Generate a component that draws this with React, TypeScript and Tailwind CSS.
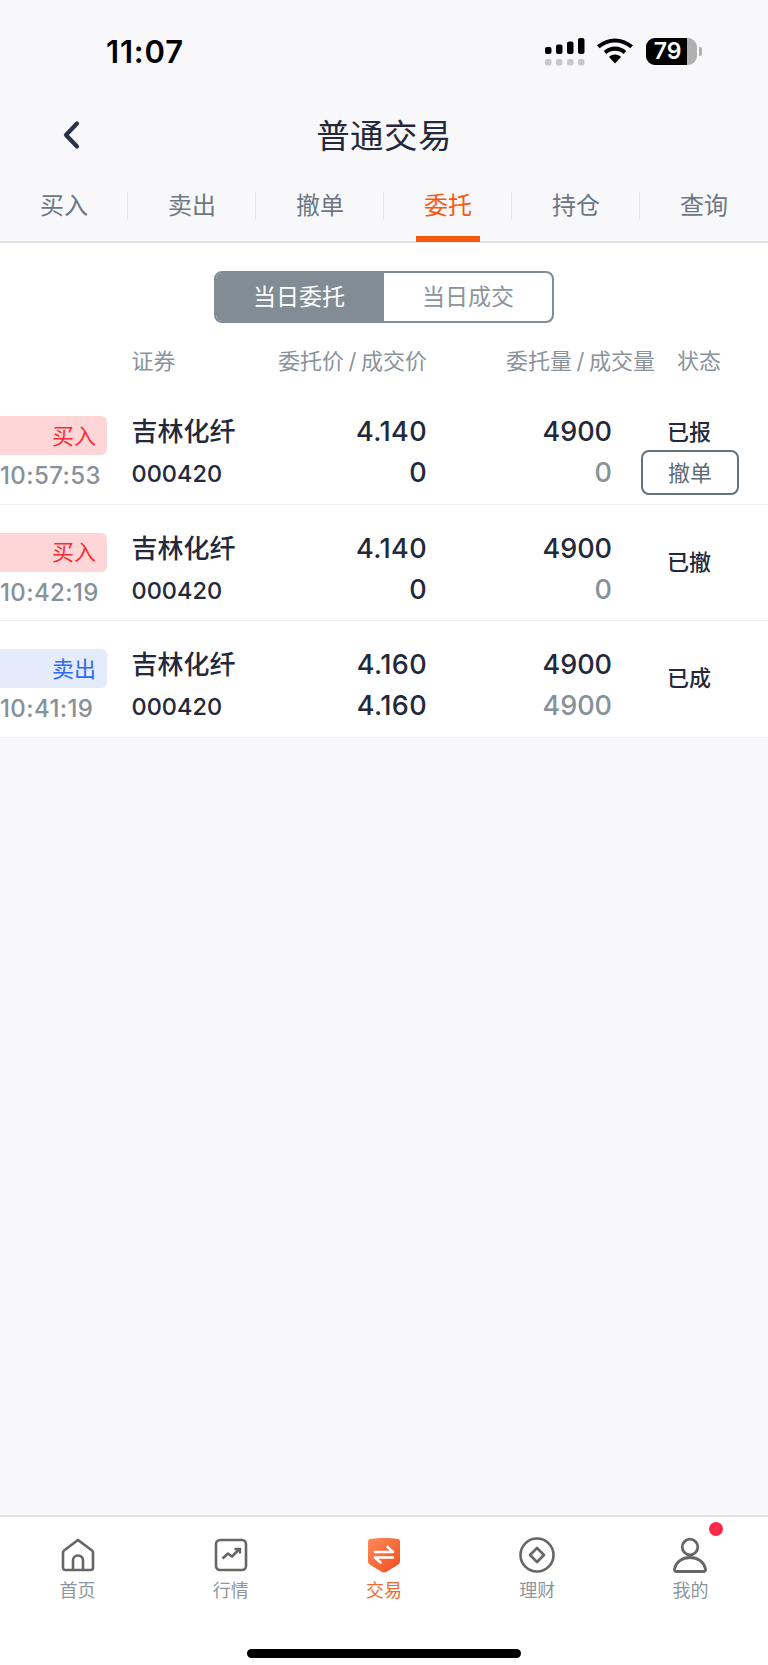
import React from "react";

const font = { fontFamily: 'Inter, "Noto Sans CJK SC", sans-serif' };

function StatusBar() {
  return (
    <div className="flex h-[100px] items-start justify-between pl-[106px] pr-[66px] pt-[33px]">
      <span className="text-[31px] leading-[38px] font-semibold text-black tracking-[0.8px]">11:07</span>
      <div className="flex items-start pt-[5px]">
        <svg width="40" height="28" viewBox="0 0 40 28" className="mr-[12px]">
          <rect x="0" y="9" width="6.5" height="7" rx="2" fill="#000" />
          <rect x="11" y="6.5" width="6.5" height="9.5" rx="2" fill="#000" />
          <rect x="22" y="3.5" width="6.5" height="12.5" rx="2" fill="#000" />
          <rect x="33" y="0" width="6.5" height="16" rx="2" fill="#000" />
          <rect x="0" y="21" width="6.5" height="6.5" rx="2" fill="#c8c8c8" />
          <rect x="11" y="21" width="6.5" height="6.5" rx="2" fill="#c8c8c8" />
          <rect x="22" y="21" width="6.5" height="6.5" rx="2" fill="#c8c8c8" />
          <rect x="33" y="21" width="6.5" height="6.5" rx="2" fill="#c8c8c8" />
        </svg>
        <svg width="36" height="26" viewBox="0 0 36 26" className="mr-[13px]">
          <path d="M18 0.5C11.5 0.5 5.6 3 0 7.2L2.6 10.2C7.4 6.6 12.4 4.6 18 4.6S28.6 6.6 33.4 10.2L36 7.2C30.4 3 24.5 0.5 18 0.5Z" fill="#000" />
          <path d="M18 8.6C13.7 8.6 9.8 10.3 6.8 13L9.4 16C11.7 14 14.7 12.8 18 12.8S24.3 14 26.6 16L29.2 13C26.2 10.3 22.3 8.6 18 8.6Z" fill="#000" />
          <path d="M18 16.6C15.7 16.6 13.6 17.5 12 18.9L18 25.5L24 18.9C22.4 17.5 20.3 16.6 18 16.6Z" fill="#000" />
        </svg>
        <div className="flex items-center">
          <div className="relative flex h-[27px] w-[51px] overflow-hidden rounded-[9px] bg-[#b0b0b0]">
            <div className="flex h-full w-[41px] items-center justify-center bg-black pl-[2px] text-[23px] font-semibold leading-none text-white">79</div>
          </div>
          <div className="ml-[2px] h-[9px] w-[3px] rounded-r-[2px] bg-[#b0b0b0]" />
        </div>
      </div>
    </div>
  );
}

function Header() {
  return (
    <div className="relative flex h-[71px] items-center justify-center">
      <svg width="20" height="30" viewBox="0 0 20 30" className="absolute left-[61px] top-[20px]">
        <path d="M16 3.5L5 15L16 26.5" fill="none" stroke="#2b3148" strokeWidth="4.2" strokeLinecap="round" strokeLinejoin="round" />
      </svg>
      <span className="text-[33.5px] leading-[40px] tracking-[0.4px] text-[#23283a]">普通交易</span>
    </div>
  );
}

function Tabs() {
  const tabs = ["买入", "卖出", "撤单", "委托", "持仓", "查询"];
  return (
    <div className="grid h-[72px] grid-cols-6 border-b-2 border-[#dfe3e8]">
      {tabs.map((t, i) => (
        <div key={t} className="relative flex items-start justify-center pt-[16px]">
          <span className={`text-[24px] leading-[38px] ${i === 3 ? "text-[#f9590d]" : "text-[#6d7783]"}`}>{t}</span>
          {i < 5 && <div className="absolute right-0 top-[21px] h-[28px] w-px bg-[#e3e6ea]" />}
          {i === 3 && <div className="absolute bottom-[-1px] left-[32px] h-[6px] w-[64px] bg-[#f9590d]" />}
        </div>
      ))}
    </div>
  );
}

const COLS = {
  a: "w-[131.5px] shrink-0",
  b: "w-[155.5px] shrink-0",
  c: "w-[140px] shrink-0 text-right",
  d: "w-[185px] shrink-0 text-right",
  e: "w-[154px] shrink-0",
};

type R = {
  side: string;
  sell?: boolean;
  time: string;
  p1: string;
  p2: string;
  q2: string;
  status: string;
  cancel?: boolean;
};

const rows: R[] = [
  { side: "买入", time: "10:57:53", p1: "4.140", p2: "0", q2: "0", status: "已报", cancel: true },
  { side: "买入", time: "10:42:19", p1: "4.140", p2: "0", q2: "0", status: "已撤" },
  { side: "卖出", sell: true, time: "10:41:19", p1: "4.160", p2: "4.160", q2: "4900", status: "已成" },
];

function Row({ r }: { r: R }) {
  return (
    <div className="flex h-[116.5px] border-b border-[#f0f1f5] bg-white pt-[28px]">
      <div className={COLS.a}>
        <div className={`flex h-[39px] w-[107px] items-center justify-end rounded-r-[6px] pr-[11px] text-[22px] leading-none ${r.sell ? "bg-[#e4ecfb] text-[#2f6bf2]" : "bg-[#ffd6d8] text-[#fb2b33]"}`}>
          {r.side}
        </div>
        <div className="mt-[6px] text-[24px] leading-[30px] font-medium tracking-[0.4px] text-[#87919a]">{r.time}</div>
      </div>
      <div className={COLS.b}>
        <div className="text-[26px] leading-[32px] font-medium text-[#23283a]">吉林化纤</div>
        <div className="mt-[11px] text-[23.5px] leading-[30px] font-medium text-[#23283a]">000420</div>
      </div>
      <div className={`${COLS.c} text-[27px] font-medium tracking-[0.4px] text-[#23283a]`}>
        <div className="leading-[32px]">{r.p1}</div>
        <div className="mt-[9px] leading-[32px]">{r.p2}</div>
      </div>
      <div className={`${COLS.d} text-[27px] font-medium`}>
        <div className="leading-[32px] text-[#23283a]">4900</div>
        <div className="mt-[9px] leading-[32px] text-[#87919a]">{r.q2}</div>
      </div>
      <div className={`${COLS.e} flex flex-col items-center ${r.cancel ? "" : "justify-center pb-[29px]"}`}>
        <div className="text-[22px] leading-[32px] font-medium text-[#23283a]">{r.status}</div>
        {r.cancel && (
          <div className="ml-[2px] mt-[2px] flex h-[45px] w-[98px] items-center justify-center rounded-[8px] border-2 border-[#66717e] text-[22px] leading-none text-[#5f6b78]">
            撤单
          </div>
        )}
      </div>
    </div>
  );
}

function HomeIcon() {
  return (
    <svg width="34" height="34" viewBox="0 0 34 34" fill="none" stroke="#666" strokeWidth="2.6" strokeLinejoin="round">
      <path d="M17 2L31 12.5C31.8 13 32 14 32 15V29.5C32 31 31 32 29.5 32H4.5C3 32 2 31 2 29.5V15C2 14 2.2 13 3 12.5L17 2Z" />
      <path d="M12 32V22.5C12 19.5 14 17.5 17 17.5S22 19.5 22 22.5V32" />
    </svg>
  );
}
function ChartIcon() {
  return (
    <svg width="34" height="34" viewBox="0 0 34 34" fill="none" stroke="#666">
      <rect x="2" y="2" width="30" height="30" rx="4" strokeWidth="2.6" />
      <path d="M8.5 20.5L14 15.5L18 18.5L25 11.5" strokeWidth="2.6" strokeLinejoin="round" />
      <path d="M20.5 11H26V15.5" strokeWidth="2.4" />
    </svg>
  );
}
function TradeIcon() {
  return (
    <svg width="34" height="36" viewBox="0 0 34 36">
      <defs>
        <linearGradient id="tg" x1="0" y1="0" x2="1" y2="1">
          <stop offset="0" stopColor="#ff8a5c" />
          <stop offset="1" stopColor="#f04e1c" />
        </linearGradient>
      </defs>
      <path d="M1 4.5C1 2.8 2 2 4 1.7C12 0.6 22 0.6 30 1.7C32 2 33 2.8 33 4.5V24C33 26 32.2 27 30.5 28L19.5 34.8C18 35.6 16 35.6 14.5 34.8L3.5 28C1.8 27 1 26 1 24V4.5Z" fill="url(#tg)" />
      <path d="M8 15H26L20.5 10" fill="none" stroke="#fff" strokeWidth="2.6" strokeLinecap="round" strokeLinejoin="round" />
      <path d="M26 20.5H8L13.5 25.5" fill="none" stroke="#fff" strokeWidth="2.6" strokeLinecap="round" strokeLinejoin="round" />
    </svg>
  );
}
function CoinIcon() {
  return (
    <svg width="38" height="38" viewBox="0 0 38 38" fill="none" stroke="#666" strokeWidth="2.6">
      <circle cx="19" cy="19" r="16.5" />
      <path d="M19 12L26 19L19 26L12 19Z" strokeLinejoin="round" />
    </svg>
  );
}
function UserIcon() {
  return (
    <svg width="34" height="36" viewBox="0 0 34 36" fill="none" stroke="#666" strokeWidth="2.8">
      <circle cx="17" cy="10" r="7.8" />
      <path d="M3.5 34.5H30.5C32 34.5 32.8 33.5 32.5 32C31 25 25 20.5 17 20.5S3 25 1.5 32C1.2 33.5 2 34.5 3.5 34.5Z" strokeLinejoin="round" />
    </svg>
  );
}

function BottomNav() {
  const items = [
    { l: "首页", i: <HomeIcon /> },
    { l: "行情", i: <ChartIcon /> },
    { l: "交易", i: <TradeIcon />, on: true },
    { l: "理财", i: <CoinIcon /> },
    { l: "我的", i: <UserIcon />, dot: true },
  ];
  return (
    <div className="h-[150px] border-t-2 border-[#e2e2e4] bg-white">
      <div className="grid grid-cols-5 pt-[19px] px-[1px]">
        {items.map((it) => (
          <div key={it.l} className="relative flex flex-col items-center">
            <div className="flex h-[38px] items-center justify-center">{it.i}</div>
            {it.dot && <div className="absolute left-[95px] top-[-14px] h-[14px] w-[14px] rounded-full bg-[#fb2b4a]" />}
            <div className={`mt-[5px] text-[18px] leading-[24px] ${it.on ? "text-[#f26a2e]" : "text-[#8d959d]"}`}>{it.l}</div>
          </div>
        ))}
      </div>
      <div className="mx-auto mt-[46px] h-[9px] w-[274px] rounded-full bg-black" />
    </div>
  );
}

export default function App() {
  return (
    <div style={font} className="flex h-[1665px] w-[768px] flex-col overflow-hidden bg-[#f8f8fb]">
      <StatusBar />
      <Header />
      <Tabs />
      <div className="bg-white">
        <div className="flex justify-center pt-[28px]">
          <div className="flex h-[52px] w-[340px] overflow-hidden rounded-[8px] border-2 border-[#828c95] text-[23px]">
            <div className="flex w-[168px] items-center justify-center bg-[#828c95] pr-[2px] text-white">当日委托</div>
            <div className="flex flex-1 items-center justify-center text-[#8b949c]">当日成交</div>
          </div>
        </div>
        <div className="flex h-[65px] items-start pt-[21px] text-[22px] leading-[34px] text-[#8a939b]">
          <div className={COLS.a} />
          <div className="w-[85.5px] shrink-0">证券</div>
          <div className="w-[210px] shrink-0 whitespace-nowrap text-right">委托价<span className="mx-[4.5px]">/</span>成交价</div>
          <div className="w-[228px] shrink-0 whitespace-nowrap text-right">委托量<span className="mx-[4.5px]">/</span>成交量</div>
          <div className="pl-[22px] whitespace-nowrap">状态</div>
        </div>
        {rows.map((r) => (
          <Row key={r.time} r={r} />
        ))}
      </div>
      <div className="flex-1" />
      <BottomNav />
    </div>
  );
}
